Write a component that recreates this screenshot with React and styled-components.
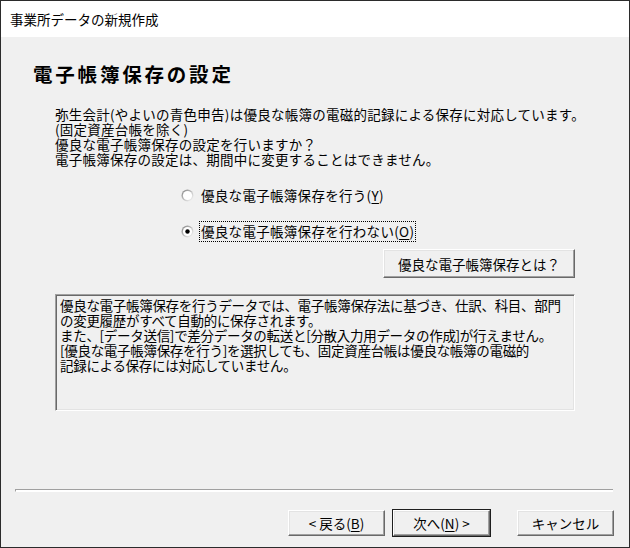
import React from 'react'
import styled, { createGlobalStyle } from 'styled-components'

const GlobalStyle = createGlobalStyle`
    html, body {
        margin: 0;
        padding: 0;
        background: #f0f0f0;
    }
    body {
        font-family: 'Noto Sans CJK JP', 'Noto Sans', sans-serif;
        color: #000;
    }
`

const Window = styled.div`
    width: 630px;
    height: 548px;
    box-sizing: border-box;
    border: 1px solid #2b2b2b;
    display: flex;
    flex-direction: column;
    background: #f0f0f0;
`

const TitleBar = styled.div`
    height: 36px;
    flex: none;
    display: flex;
    align-items: center;
    padding-left: 9px;
    background: #fff;
    font-size: 13.5px;
`

const Body = styled.div`
    flex: 1;
    display: flex;
    flex-direction: column;
`

const Heading = styled.h1`
    margin: 25px 0 0 32px;
    font-size: 19.5px;
    line-height: 24px;
    font-weight: bold;
    letter-spacing: 2.8px;
`

const Content = styled.div`
    margin-left: 54px;
    width: 520px;
    display: flex;
    flex-direction: column;
    font-size: 13.5px;
    line-height: 15px;
`

const Intro = styled.p`
    margin: 21px 0 0 0;
    white-space: nowrap;
    letter-spacing: 0.25px;
`

const RadioGroup = styled.div`
    margin: 17px 0 0 126px;
    display: flex;
    flex-direction: column;
    gap: 14px;
`

const RadioRow = styled.label`
    height: 22px;
    display: flex;
    align-items: center;
    gap: 6px;
`

const RadioLabel = styled.span`
    padding: 2px 1px;
    line-height: 15px;
    letter-spacing: 0.3px;
    outline: ${props => (props.focused ? '1px dotted #000' : 'none')};
    outline-offset: 0;
    u {
        text-decoration: underline;
        text-underline-offset: 2px;
    }
`

const Button = styled.button`
    font-family: inherit;
    font-size: 13.5px;
    color: #000;
    background: #f0f0f0;
    box-sizing: border-box;
    padding: 0;
    border: 1px solid;
    border-color: #fff #696969 #696969 #fff;
    box-shadow: inset -1px -1px 0 #a0a0a0, inset 1px 1px 0 #e3e3e3,
        ${props => (props.primary ? '0 0 0 1px #1e1e1e' : '0 0 0 0 transparent')};
    u {
        text-underline-offset: 2px;
    }
`

const HelpButton = styled(Button)`
    align-self: flex-end;
    margin-top: 7px;
    width: 192px;
    height: 29px;
`

const InfoBox = styled.div`
    margin-top: 16px;
    height: 117px;
    box-sizing: border-box;
    border: 1px solid;
    border-color: #a0a0a0 #fff #fff #a0a0a0;
    box-shadow: inset 1px 1px 0 #696969, inset -1px -1px 0 #e3e3e3;
    padding: 3px 4px;
    white-space: nowrap;
    letter-spacing: -0.3px;
`

const Separator = styled.div`
    margin: auto 16px 0 14px;
    height: 1px;
    border-top: 1px solid #a0a0a0;
    border-bottom: 1px solid #fff;
    border-left: 1px solid #a0a0a0;
    background: #fff;
`

const ButtonRow = styled.div`
    display: flex;
    justify-content: flex-end;
    padding: 18px 15px 11px 0;
`

const NavButton = styled(Button)`
    width: 97px;
    height: 26px;
    margin-left: ${props => props.gap}px;
`

const Radio = ({ checked }) => (
    <svg width="13" height="13" viewBox="0 0 13 13">
        <defs>
            <linearGradient id="ring" x1="0" y1="0" x2="1" y2="1">
                <stop offset="0" stopColor="#808080" />
                <stop offset="1" stopColor="#ffffff" />
            </linearGradient>
        </defs>
        <circle cx="6.5" cy="6.5" r="6" fill="url(#ring)" />
        <circle cx="6.5" cy="6.5" r="4.6" fill="#fff" />
        {checked && <circle cx="6.5" cy="6.5" r="2.2" fill="#000" />}
    </svg>
)

const App = () => (
    <>
        <GlobalStyle />
        <Window>
            <TitleBar>事業所データの新規作成</TitleBar>
            <Body>
                <Heading>電子帳簿保存の設定</Heading>
                <Content>
                    <Intro>
                        弥生会計(やよいの青色申告)は優良な帳簿の電磁的記録による保存に対応しています。
                        <br />
                        (固定資産台帳を除く)
                        <br />
                        優良な電子帳簿保存の設定を行いますか？
                        <br />
                        電子帳簿保存の設定は、期間中に変更することはできません。
                    </Intro>
                    <RadioGroup>
                        <RadioRow>
                            <Radio />
                            <RadioLabel>
                                優良な電子帳簿保存を行う(<u>Y</u>)
                            </RadioLabel>
                        </RadioRow>
                        <RadioRow>
                            <Radio checked />
                            <RadioLabel focused>
                                優良な電子帳簿保存を行わない(<u>O</u>)
                            </RadioLabel>
                        </RadioRow>
                    </RadioGroup>
                    <HelpButton>優良な電子帳簿保存とは？</HelpButton>
                    <InfoBox>
                        優良な電子帳簿保存を行うデータでは、電子帳簿保存法に基づき、仕訳、科目、部門
                        <br />
                        の変更履歴がすべて自動的に保存されます。
                        <br />
                        また、[データ送信]で差分データの転送と[分散入力用データの作成]が行えません。
                        <br />
                        [優良な電子帳簿保存を行う]を選択しても、固定資産台帳は優良な帳簿の電磁的
                        <br />
                        記録による保存には対応していません。
                    </InfoBox>
                </Content>
                <Separator />
                <ButtonRow>
                    <NavButton gap={0}>
                        &lt; 戻る(<u>B</u>)
                    </NavButton>
                    <NavButton gap={8} primary>
                        次へ(<u>N</u>) &gt;
                    </NavButton>
                    <NavButton gap={27}>キャンセル</NavButton>
                </ButtonRow>
            </Body>
        </Window>
    </>
)

export default App
